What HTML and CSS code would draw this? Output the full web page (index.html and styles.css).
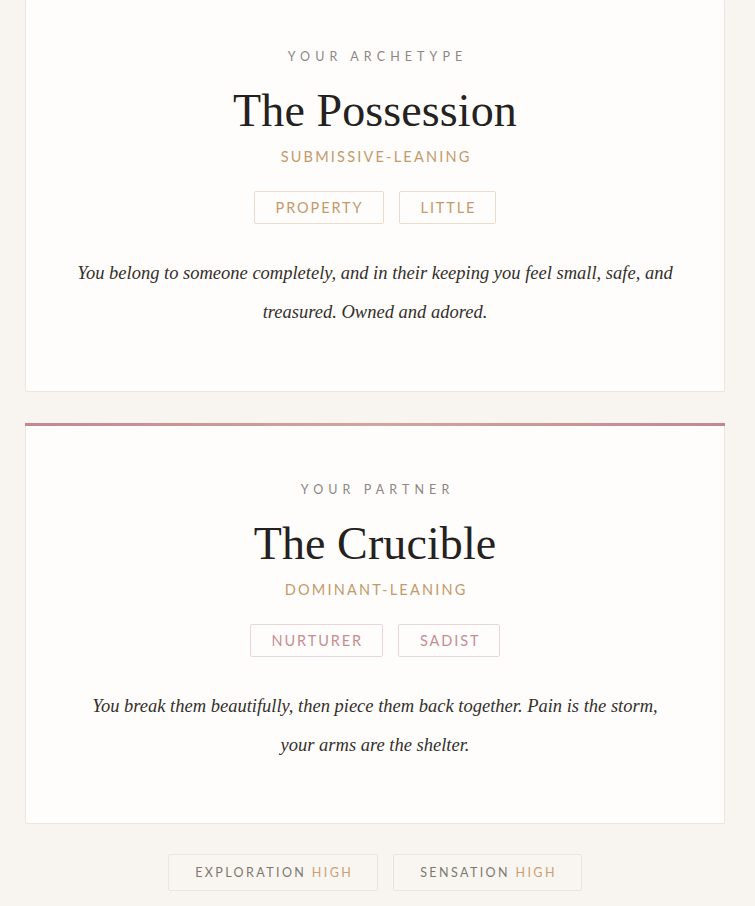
FILE: index.html
```html
<!DOCTYPE html>
<html lang="en">
<head>
<meta charset="utf-8">
<title>Your Archetype</title>
<link rel="stylesheet" href="styles.css">
</head>
<body>
<main class="page">
  <section class="card card--clipped">
    <p class="eyebrow">Your Archetype</p>
    <h1 class="title">The Possession</h1>
    <p class="lean">Submissive-Leaning</p>
    <div class="tags">
      <span class="tag tag--gold">Property</span>
      <span class="tag tag--gold">Little</span>
    </div>
    <p class="desc">You belong to someone completely, and in their keeping you feel small, safe, and<br>treasured. Owned and adored.</p>
  </section>

  <section class="card card--accent">
    <p class="eyebrow">Your Partner</p>
    <h2 class="title">The Crucible</h2>
    <p class="lean">Dominant-Leaning</p>
    <div class="tags">
      <span class="tag tag--rose">Nurturer</span>
      <span class="tag tag--rose">Sadist</span>
    </div>
    <p class="desc">You break them beautifully, then piece them back together. Pain is the storm,<br>your arms are the shelter.</p>
  </section>

  <div class="pills">
    <span class="pill">Exploration <em class="pill-level">High</em></span>
    <span class="pill">Sensation <em class="pill-level">High</em></span>
  </div>
</main>
</body>
</html>
```

FILE: styles.css
```css
* { box-sizing: border-box; }

html, body {
  margin: 0;
  padding: 0;
  background: #f8f5f1;
}

.page {
  width: 700px;
  margin-left: 25px;
  display: flex;
  flex-direction: column;
  gap: 31px;
  font-family: "Lato", "Liberation Sans", sans-serif;
}

.card {
  background: #fefdfb;
  border: 1px solid #ebe6df;
  border-radius: 2px;
  text-align: center;
  display: flex;
  flex-direction: column;
  align-items: center;
}

.card--clipped {
  border-top: none;
  padding: 49px 40px 59px;
}

.card--accent {
  border-top: none;
  position: relative;
  padding: 59px 40px 58px;
}

.card--accent::before {
  content: "";
  position: absolute;
  left: -1px;
  right: -1px;
  top: 0;
  height: 3px;
  background: linear-gradient(90deg, #c4878d 0%, #d3a59f 50%, #c4878d 100%);
}

.eyebrow {
  margin: 0;
  font-size: 12.5px;
  line-height: 16px;
  letter-spacing: 5.1px;
  text-transform: uppercase;
  color: #8c8782;
  padding-left: 5.1px;
}

.title {
  margin: 16px 0 0;
  font-family: "Liberation Serif", "DejaVu Serif", serif;
  font-weight: 400;
  font-size: 46px;
  line-height: 60px;
  color: #24211f;
  letter-spacing: 0.1px;
}

.lean {
  margin: 6px 0 0;
  font-size: 14.5px;
  line-height: 20px;
  letter-spacing: 2.2px;
  text-transform: uppercase;
  color: #c39a6c;
  padding-left: 2.2px;
}

.tags {
  margin-top: 24px;
  display: flex;
  gap: 15px;
  justify-content: center;
}

.tag {
  height: 33px;
  display: inline-flex;
  align-items: center;
  padding: 0 19px 0 21px;
  font-size: 14.5px;
  letter-spacing: 1.9px;
  text-transform: uppercase;
  border-radius: 2px;
  background: #fefdfb;
}

.tag--gold {
  color: #c39a6c;
  border: 1px solid #ebdcc9;
}

.tag--rose {
  color: #c58e93;
  border: 1px solid #efd4d6;
}

.desc {
  margin: 30px 0 0;
  font-family: "Liberation Serif", "DejaVu Serif", serif;
  font-style: italic;
  font-size: 18.5px;
  line-height: 39px;
  color: #35302c;
}

.pills {
  display: flex;
  justify-content: center;
  gap: 15px;
  margin-top: -1px;
}

.pill {
  height: 37px;
  display: inline-flex;
  align-items: center;
  padding: 0 24px 0 26px;
  border: 1px solid #ebe5de;
  border-radius: 2px;
  background: #f9f6f2;
  font-size: 12.5px;
  letter-spacing: 2.4px;
  text-transform: uppercase;
  color: #7d7771;
  white-space: pre;
}

.pill-level {
  font-style: normal;
  color: #c9a073;
}
```
